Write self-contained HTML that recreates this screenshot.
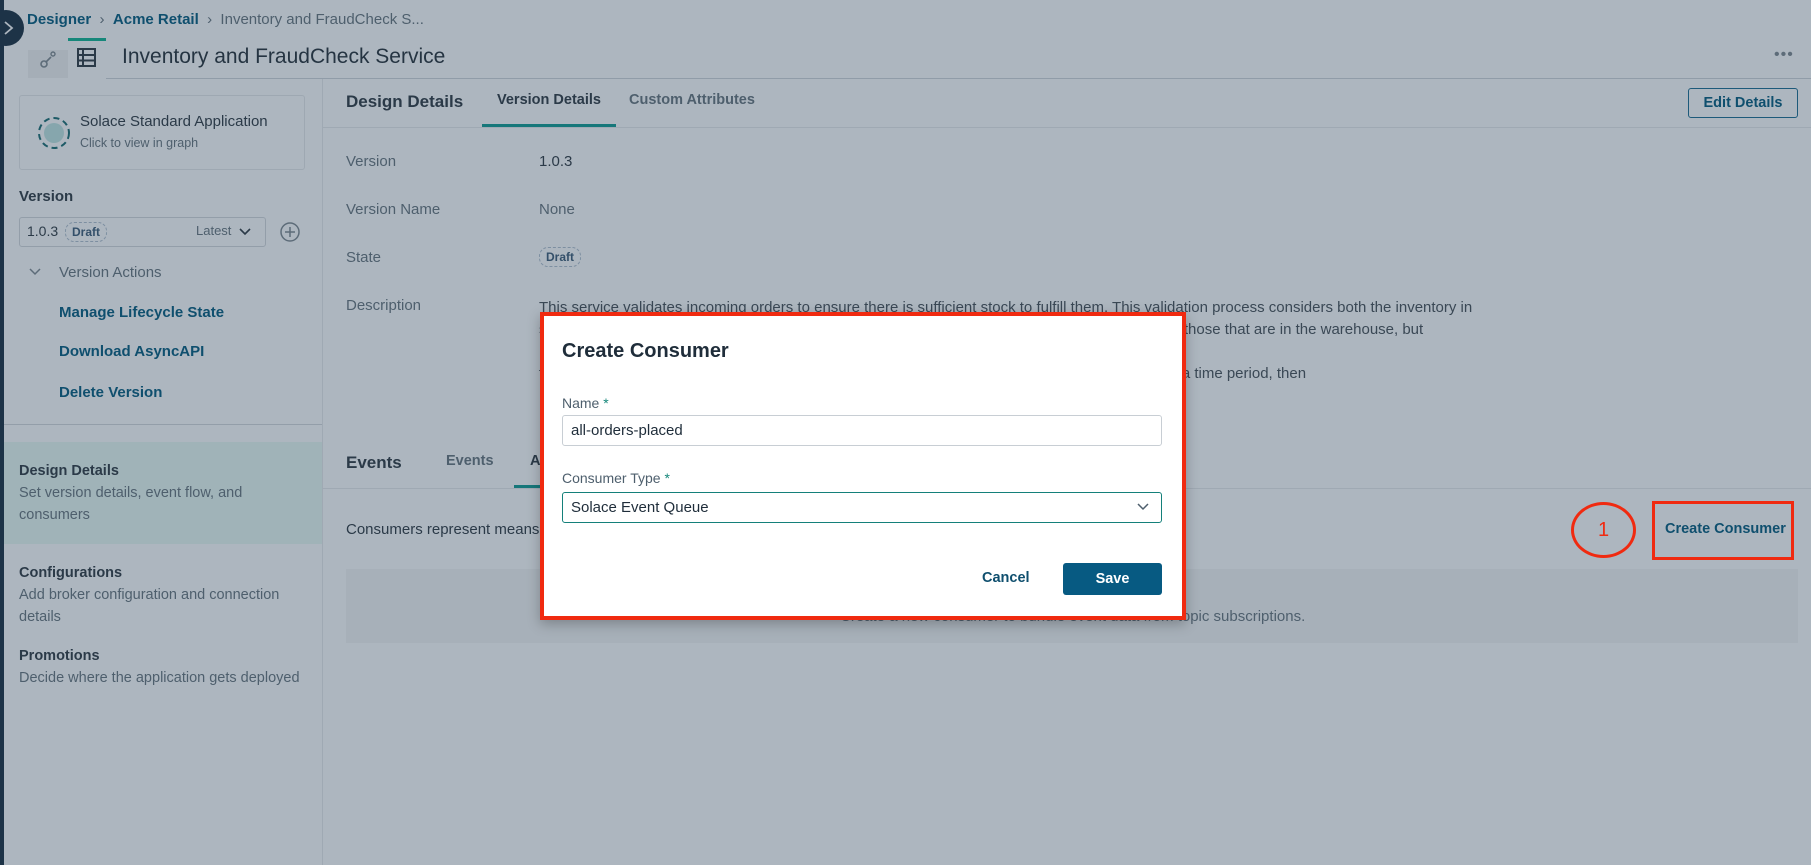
<!DOCTYPE html>
<html><head><meta charset="utf-8"><style>
*{box-sizing:border-box;margin:0;padding:0}
body{width:1811px;height:865px;overflow:hidden;background:#adb6bf;font-family:"Liberation Sans",sans-serif;color:#2b3a48;position:relative;font-size:15px}
.a{position:absolute;white-space:nowrap}
.link{color:#0f4f6e;font-weight:bold}
.muted{color:#4e5f6d}
</style></head><body>
<div class="a" style="left:0;top:0;width:4px;height:865px;background:#1d3347"></div>
<div class="a" style="left:-12px;top:10px;width:36px;height:36px;border-radius:50%;background:#1d3347"></div>
<svg class="a" style="left:2px;top:20px" width="14" height="16"><path d="M3 2 L10 8 L3 14" stroke="#adb6bf" stroke-width="1.8" fill="none"/></svg>
<div class="a" style="left:27px;top:11px;font-size:15px"><span class="link">Designer</span> <span class="muted">&nbsp;›&nbsp;</span> <span class="link">Acme Retail</span> <span class="muted">&nbsp;›&nbsp; Inventory and FraudCheck S...</span></div>
<div class="a" style="left:28px;top:50px;width:40px;height:28px;background:#a5aeb7"></div>
<svg class="a" style="left:36px;top:48px" width="24" height="24"><circle cx="8" cy="16" r="3" stroke="#5d6c79" fill="none" stroke-width="1.6"/><circle cx="17" cy="6" r="2" stroke="#5d6c79" fill="none" stroke-width="1.4"/><path d="M10 14 L15 9" stroke="#5d6c79" stroke-width="1.6"/></svg>
<div class="a" style="left:68px;top:38px;width:38px;height:3px;background:#16877a"></div>
<svg class="a" style="left:75px;top:46px" width="24" height="24"><rect x="3" y="3" width="17" height="17" fill="none" stroke="#2b3a48" stroke-width="2"/><path d="M3 9H20M3 14.5H20M8 3V20" stroke="#2b3a48" stroke-width="2"/></svg>
<div class="a" style="left:106px;top:78px;width:1705px;height:1px;background:#909ca8"></div>
<div class="a" style="left:122px;top:45px;font-size:21px;color:#253442">Inventory and FraudCheck Service</div>
<div class="a" style="left:1774px;top:46px;font-size:16px;color:#5d6c79;letter-spacing:1px">•••</div>
<!-- sidebar -->
<div class="a" style="left:322px;top:79px;width:1px;height:786px;background:#9fa9b3"></div>
<div class="a" style="left:19px;top:95px;width:286px;height:75px;border:1px solid #9ea8b2;border-radius:3px"></div>
<svg class="a" style="left:37px;top:116px" width="34" height="34"><circle cx="17" cy="17" r="15" fill="none" stroke="#1d5a66" stroke-width="2" stroke-dasharray="6 4"/><circle cx="17" cy="17" r="10" fill="#86a6ad"/></svg>
<div class="a" style="left:80px;top:113px;font-size:15px">Solace Standard Application</div>
<div class="a muted" style="left:80px;top:136px;font-size:12.5px">Click to view in graph</div>
<div class="a" style="left:19px;top:188px;font-size:15px;font-weight:bold">Version</div>
<div class="a" style="left:19px;top:217px;width:247px;height:30px;border:1px solid #939ea9;border-radius:3px"></div>
<div class="a" style="left:27px;top:223px;font-size:14px">1.0.3</div>
<div class="a" style="left:65px;top:222px;font-size:12px;font-weight:bold;color:#34506a;border:1px dashed #7d8fa1;border-radius:9px;padding:2px 6px">Draft</div>
<div class="a muted" style="left:196px;top:223px;font-size:13px">Latest</div>
<svg class="a" style="left:238px;top:226px" width="14" height="12"><path d="M2 3L7 8L12 3" stroke="#2b3a48" stroke-width="1.6" fill="none"/></svg>
<svg class="a" style="left:279px;top:221px" width="22" height="22"><circle cx="11" cy="11" r="9" fill="none" stroke="#5d6c79" stroke-width="1.5"/><path d="M11 6V16M6 11H16" stroke="#5d6c79" stroke-width="1.5"/></svg>
<svg class="a" style="left:28px;top:266px" width="14" height="12"><path d="M2 3L7 8L12 3" stroke="#5d6c79" stroke-width="1.5" fill="none"/></svg>
<div class="a muted" style="left:59px;top:264px;font-size:15px">Version Actions</div>
<div class="a link" style="left:59px;top:304px;font-size:15px">Manage Lifecycle State</div>
<div class="a link" style="left:59px;top:343px;font-size:15px">Download AsyncAPI</div>
<div class="a link" style="left:59px;top:384px;font-size:15px">Delete Version</div>
<div class="a" style="left:4px;top:424px;width:318px;height:1px;background:#939ea9"></div>
<div class="a" style="left:4px;top:442px;width:318px;height:102px;background:#a0b3b8"></div>
<div class="a" style="left:19px;top:460px;font-size:14.5px;font-weight:bold;line-height:22px">Design Details</div>
<div class="a muted" style="left:19px;top:482px;font-size:14.5px;line-height:22px;white-space:normal;width:260px">Set version details, event flow, and consumers</div>
<div class="a" style="left:19px;top:562px;font-size:14.5px;font-weight:bold;line-height:22px">Configurations</div>
<div class="a muted" style="left:19px;top:584px;font-size:14.5px;line-height:22px;white-space:normal;width:290px">Add broker configuration and connection details</div>
<div class="a" style="left:19px;top:645px;font-size:14.5px;font-weight:bold;line-height:22px">Promotions</div>
<div class="a muted" style="left:19px;top:667px;font-size:14.5px;line-height:22px">Decide where the application gets deployed</div>
<!-- main -->
<div class="a" style="left:346px;top:92px;font-size:17px;font-weight:bold">Design Details</div>
<div class="a" style="left:497px;top:92px;font-size:14.5px;font-weight:bold">Version Details</div>
<div class="a muted" style="left:629px;top:92px;font-size:14.5px;font-weight:bold">Custom Attributes</div>
<div class="a" style="left:323px;top:127px;width:1488px;height:1px;background:#9fa9b3"></div>
<div class="a" style="left:482px;top:124px;width:134px;height:3px;background:#16777a"></div>
<div class="a" style="left:1688px;top:88px;width:110px;height:30px;border:1px solid #1d5a7a;border-radius:3px;text-align:center;line-height:28px;font-size:14.5px" ><span class="link">Edit Details</span></div>
<div class="a muted" style="left:346px;top:153px">Version</div><div class="a" style="left:539px;top:153px">1.0.3</div>
<div class="a muted" style="left:346px;top:201px">Version Name</div><div class="a muted" style="left:539px;top:201px">None</div>
<div class="a muted" style="left:346px;top:249px">State</div>
<div class="a" style="left:539px;top:247px;font-size:12px;font-weight:bold;color:#34506a;border:1px dashed #7d8fa1;border-radius:9px;padding:2px 6px">Draft</div>
<div class="a muted" style="left:346px;top:297px">Description</div>
<div class="a" style="left:539px;top:297px;line-height:22px;color:#3a4855">This service validates incoming orders to ensure there is sufficient stock to fulfill them. This validation process considers both the inventory in<br>stock and the inventory that's expected to arrive. Inventory items that are considered in stock are those that are in the warehouse, but<br><br>fraudulent orders: If the order is placed for more than a set quantity by the same customer within a time period, then</div>
<div class="a" style="left:346px;top:453px;font-size:17px;font-weight:bold">Events</div>
<div class="a muted" style="left:446px;top:453px;font-size:14.5px;font-weight:bold">Events</div>
<div class="a" style="left:530px;top:453px;font-size:14.5px;font-weight:bold">A</div>
<div class="a" style="left:323px;top:488px;width:1488px;height:1px;background:#9fa9b3"></div>
<div class="a" style="left:514px;top:485px;width:30px;height:3px;background:#16777a"></div>
<div class="a" style="left:346px;top:521px">Consumers represent means</div>
<div class="a" style="left:346px;top:569px;width:1452px;height:74px;background:#a7b0b9"></div>
<div class="a muted" style="left:840px;top:608px">Create a new consumer to bundle event data from topic subscriptions.</div>
<div class="a" style="left:1571px;top:502px;width:65px;height:56px;border:3px solid #f02a10;border-radius:50%;text-align:center;line-height:50px;color:#f02a10;font-size:20px">1</div>
<div class="a" style="left:1652px;top:501px;width:142px;height:59px;border:3px solid #f02a10"></div>
<div class="a link" style="left:1665px;top:521px;font-size:14.5px">Create Consumer</div>
<!-- modal -->
<div class="a" style="left:540px;top:312px;width:646px;height:308px;background:#fff;border:4px solid #f02a10;box-shadow:0 4px 12px rgba(0,0,0,.25)"></div>
<div class="a" style="left:562px;top:340px;font-size:20px;font-weight:bold;color:#1f2d3a">Create Consumer</div>
<div class="a muted" style="left:562px;top:395px;font-size:14px">Name <span style="color:#16877a">*</span></div>
<div class="a" style="left:562px;top:415px;width:600px;height:31px;border:1px solid #c8ced4;border-radius:3px;padding-left:8px;line-height:29px;color:#1f2d3a">all-orders-placed</div>
<div class="a muted" style="left:562px;top:470px;font-size:14px">Consumer Type <span style="color:#16877a">*</span></div>
<div class="a" style="left:562px;top:492px;width:600px;height:31px;border:1px solid #14807a;border-radius:3px;padding-left:8px;line-height:29px;color:#1f2d3a">Solace Event Queue</div>
<svg class="a" style="left:1136px;top:501px" width="14" height="12"><path d="M2 3L7 8L12 3" stroke="#4e5f6d" stroke-width="1.5" fill="none"/></svg>
<div class="a link" style="left:982px;top:570px;font-size:14.5px">Cancel</div>
<div class="a" style="left:1063px;top:563px;width:99px;height:32px;background:#075a82;border-radius:3px;color:#fff;font-weight:bold;text-align:center;line-height:32px;font-size:14.5px">Save</div>
</body></html>
